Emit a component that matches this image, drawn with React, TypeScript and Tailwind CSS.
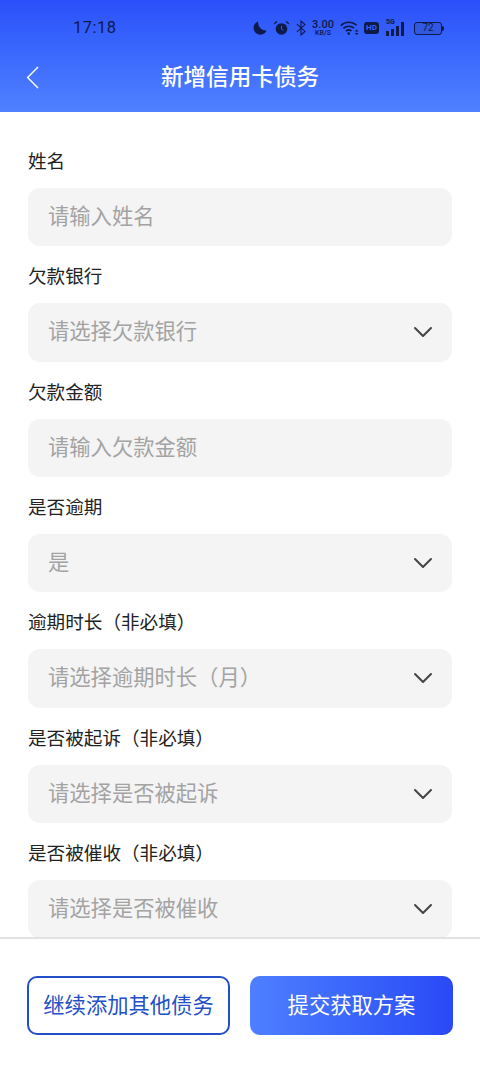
import React from 'react';

const fields = [
  { label: '姓名', placeholder: '请输入姓名' },
  { label: '欠款银行', placeholder: '请选择欠款银行', select: true },
  { label: '欠款金额', placeholder: '请输入欠款金额' },
  { label: '是否逾期', placeholder: '是', select: true },
  { label: '逾期时长（非必填）', placeholder: '请选择逾期时长（月）', select: true },
  { label: '是否被起诉（非必填）', placeholder: '请选择是否被起诉', select: true },
  { label: '是否被催收（非必填）', placeholder: '请选择是否被催收', select: true },
];

const StatusIcons = () => (
  <div className="flex items-center text-[#0d1a4a]">
    {/* moon */}
    <svg width="14" height="14" viewBox="0 0 14 14" fill="currentColor">
      <path d="M5.2 0.4 A6.8 6.8 0 1 0 13.6 9.6 A8 8 0 0 1 5.2 0.4 Z" />
    </svg>
    {/* alarm */}
    <svg width="15" height="16" viewBox="0 0 16 16" className="ml-[7px]" fill="currentColor">
      <circle cx="8" cy="9" r="6.2" />
      <path d="M2.8 1.2 L0.6 3.2 M13.2 1.2 L15.4 3.2" stroke="currentColor" strokeWidth="1.4" strokeLinecap="round" />
      <path d="M8 5.8 V9 L10 10.4" stroke="#3a62f5" strokeWidth="1" fill="none" />
    </svg>
    {/* bluetooth */}
    <svg width="10" height="16" viewBox="0 0 10 16" className="ml-[7px]" fill="none" stroke="currentColor" strokeWidth="1.1">
      <path d="M1 4.2 L9 11.4 L5 15 V1 L9 4.6 L1 11.8" />
    </svg>
    {/* speed */}
    <div className="ml-[5px] flex w-[24px] flex-col items-center font-['Roboto',sans-serif] font-medium">
      <span className="text-[11px] leading-[10px]">3.00</span>
      <span className="text-[7px] leading-[7px]">KB/S</span>
    </div>
    {/* wifi */}
    <svg width="20" height="16" viewBox="0 0 20 16" className="ml-[5px]" fill="none" stroke="currentColor" strokeWidth="1.7">
      <path d="M0.8 5.6 C5 1.2 12 1.2 16.6 5.2" />
      <path d="M3.4 8.4 C6.4 5.6 11 5.6 14 8.2" />
      <path d="M6 11 C7.6 9.6 9.8 9.6 11.4 11" />
      <circle cx="8.7" cy="13.6" r="1.3" fill="currentColor" stroke="none" />
      <path d="M14.6 11.6 H18.6 L16.6 9.6 Z M14.6 13 H18.6 L16.6 15 Z" fill="currentColor" stroke="none" />
    </svg>
    {/* HD */}
    <div className="ml-[4px] flex h-[12px] w-[15px] items-center justify-center rounded-[3px] bg-[#0d1a4a] font-['Roboto',sans-serif] text-[8px] leading-none font-bold text-[#3a62f5]">HD</div>
    {/* 5G signal */}
    <div className="relative ml-[7px] flex h-[15px] w-[21px] items-end gap-[2px]">
      <span className="absolute top-[-3px] left-0 font-['Roboto',sans-serif] text-[7px] leading-[9px] font-bold">5G</span>
      <span className="h-[5px] w-[3px] bg-current" />
      <span className="h-[7px] w-[3px] bg-current" />
      <span className="h-[10px] w-[3px] bg-current" />
      <span className="h-[14px] w-[3px] bg-current" />
    </div>
    {/* battery */}
    <div className="ml-[7px] flex items-center">
      <div className="flex h-[13px] w-[28px] items-center justify-center rounded-[3px] border border-[#0d1a4a] bg-[#3158e0] font-['Roboto',sans-serif] text-[10px] leading-none">72</div>
      <span className="h-[5px] w-[1.5px] rounded-r-sm bg-[#0d1a4a]" />
    </div>
  </div>
);

const Chevron = () => (
  <svg width="20" height="12" viewBox="0 0 20 12" fill="none" stroke="#444" strokeWidth="2" strokeLinecap="round" strokeLinejoin="round">
    <path d="M2 2 L10 10 L18 2" />
  </svg>
);

export default function App() {
  return (
    <div className="flex h-[1072px] w-[480px] flex-col overflow-hidden bg-white font-['Noto_Sans_CJK_SC','Noto_Sans',sans-serif]">
      {/* header */}
      <div className="h-[112px] shrink-0 bg-gradient-to-b from-[#2b4ffa] to-[#5081ff]">
        <div className="flex h-[56px] items-center">
          <div className="w-[253px] pl-[73px] font-['Roboto',sans-serif] text-[16.5px] leading-none tracking-[0.5px] text-[#0d1a4a]">17:18</div>
          <StatusIcons />
        </div>
        <div className="relative flex h-[42px] items-center justify-center">
          <svg width="13" height="23" viewBox="0 0 13 23" className="absolute left-[26px]" fill="none" stroke="#fff" strokeWidth="1.4">
            <path d="M12 1 L1.6 11.5 L12 22" />
          </svg>
          <span className="mt-[-2px] text-[22.6px] leading-none font-medium text-white">新增信用卡债务</span>
        </div>
      </div>

      {/* form */}
      <div className="h-[825px] shrink-0 overflow-hidden px-[28px] pt-[32px]">
        {fields.map((f) => (
          <div key={f.label} className="h-[115.33px]">
            <div className="h-[44px] text-[18.6px] leading-[31px] text-[#222]">{f.label}</div>
            <div className="flex h-[58.33px] items-center justify-between rounded-[12px] bg-[#f4f4f4] pr-[19px] pl-[20px]">
              <span className="mt-[-5px] text-[21.3px] leading-none text-[#a3a3a3]">{f.placeholder}</span>
              {f.select && <Chevron />}
            </div>
          </div>
        ))}
      </div>

      {/* footer */}
      <div className="flex grow justify-between border-t-[2px] border-[#e2e2e2] px-[27px] pt-[37px]">
        <button className="flex h-[59px] w-[203px] items-center justify-center rounded-[10px] border-2 border-[#2350c8] pb-[3px] text-[21.3px] text-[#2350c8]">
          继续添加其他债务
        </button>
        <button className="flex h-[59px] w-[203px] items-center justify-center rounded-[10px] bg-gradient-to-r from-[#4f7fff] to-[#2a48f6] pb-[3px] text-[21.3px] text-white">
          提交获取方案
        </button>
      </div>
    </div>
  );
}
